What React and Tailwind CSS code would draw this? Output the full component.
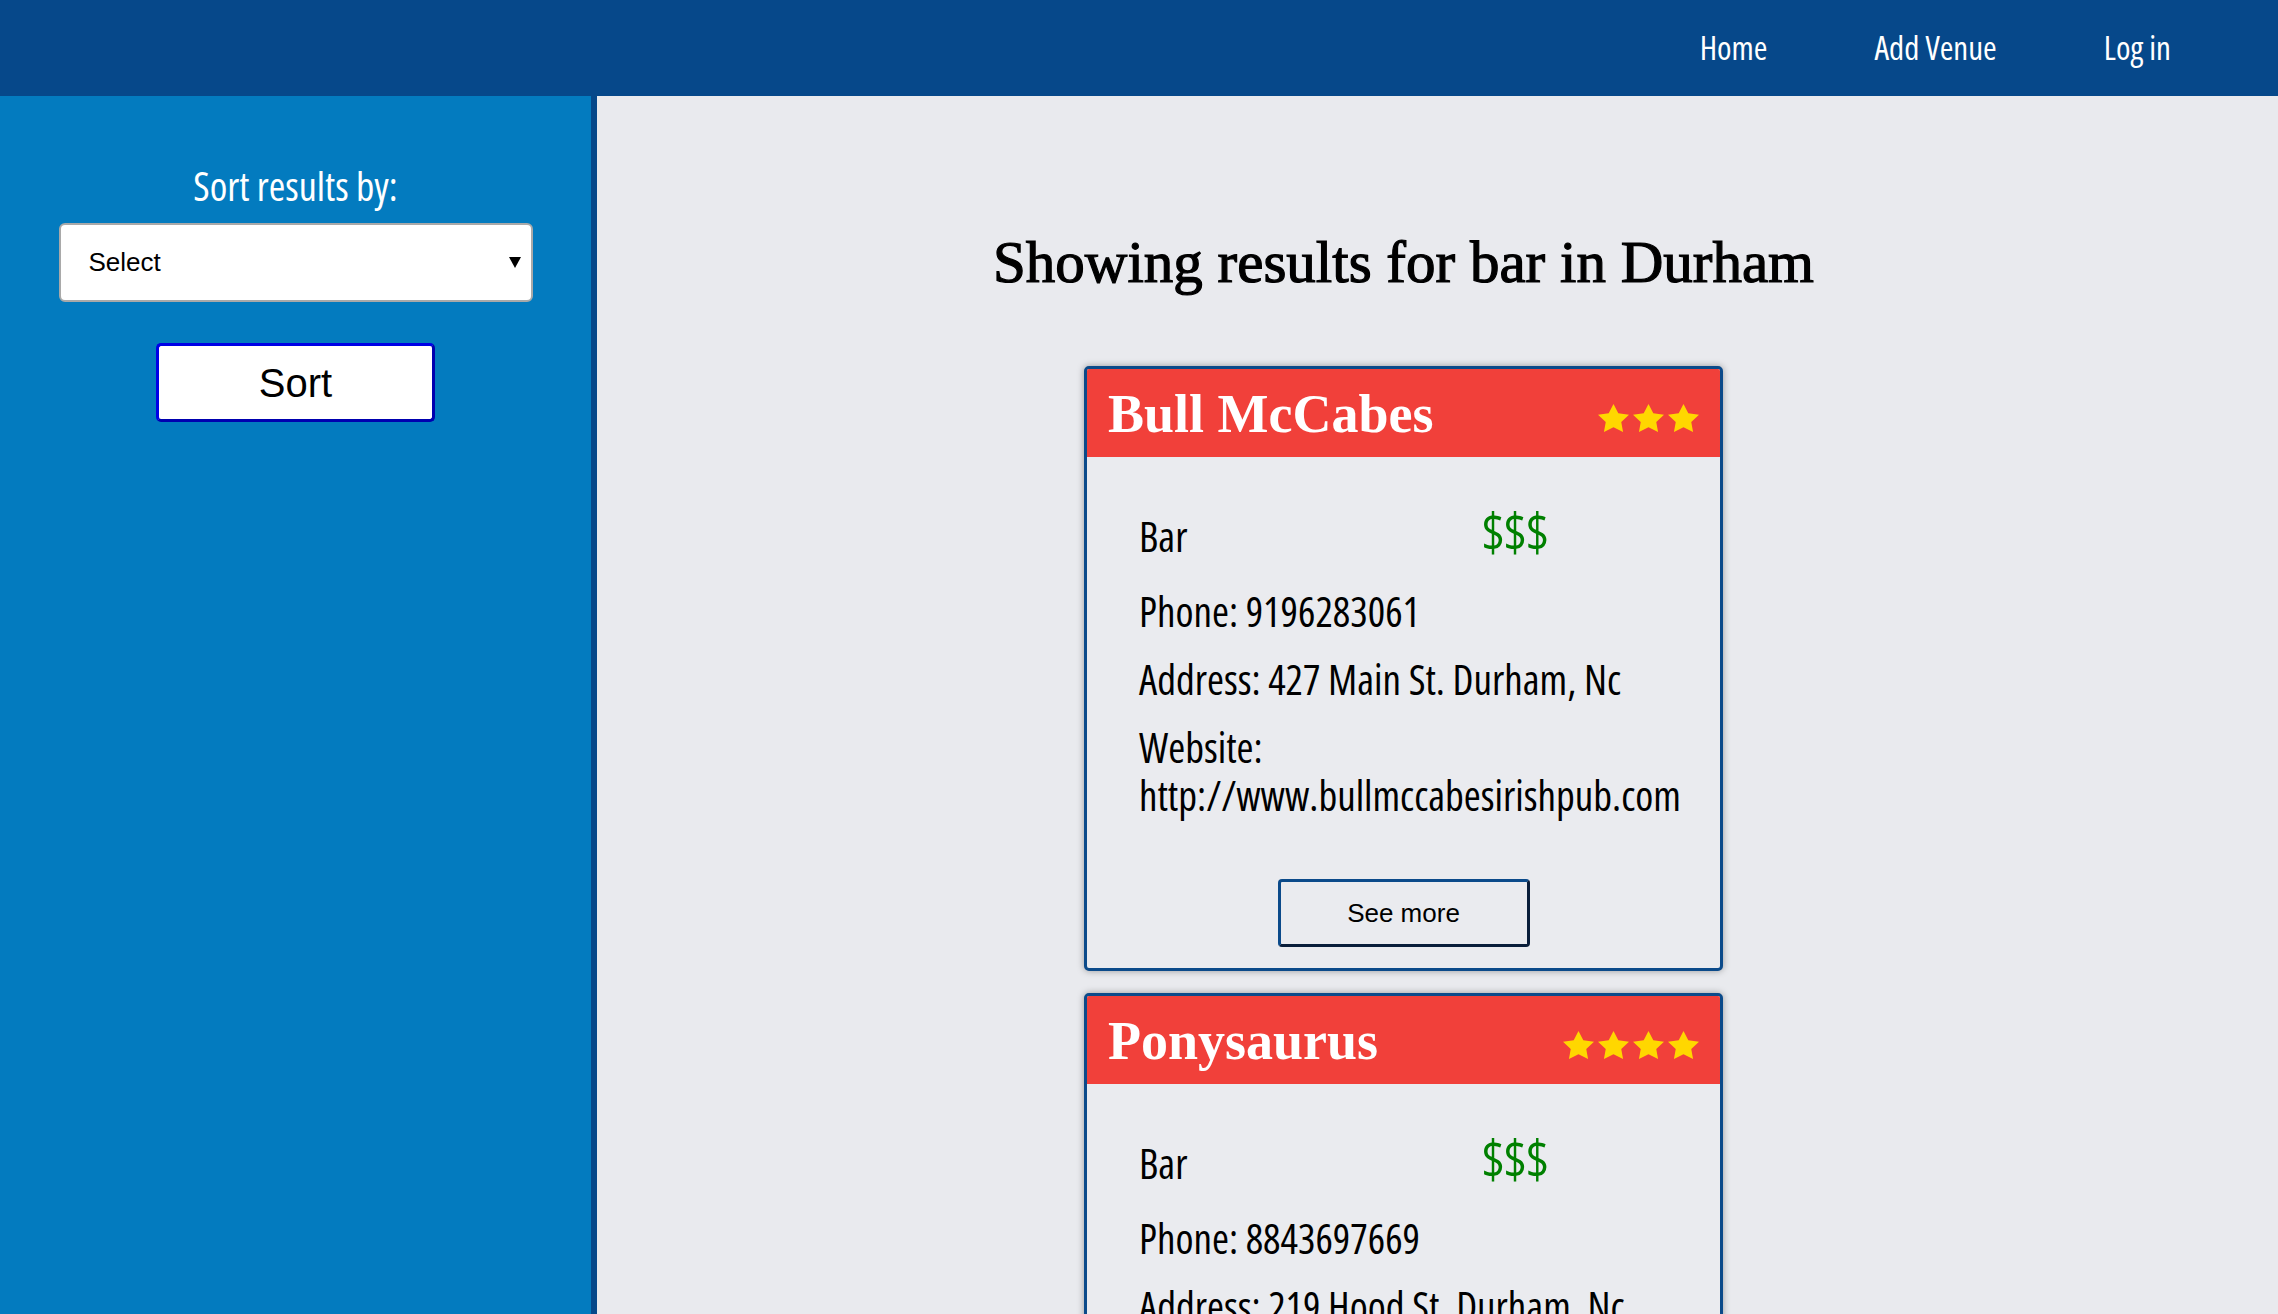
/* Venue search results — blue sidebar with sort controls, red-topped venue cards. */
import React from "react";

const NARROW = "font-['Open_Sans',sans-serif] font-stretch-condensed";
const SERIF = "font-['Liberation_Serif','DejaVu_Serif',serif]";
const ARIAL = "font-['Liberation_Sans',Arial,sans-serif]";

const venues = [
  {
    name: "Bull McCabes",
    stars: 3,
    kind: "Bar",
    price: "$$$",
    phone: "9196283061",
    address: "427 Main St. Durham, Nc",
    website: "http://www.bullmccabesirishpub.com",
  },
  {
    name: "Ponysaurus",
    stars: 4,
    kind: "Bar",
    price: "$$$",
    phone: "8843697669",
    address: "219 Hood St. Durham, Nc",
    website: "http://www.ponysaurusbrewing.com",
  },
  {
    name: "Fullsteam",
    stars: 4,
    kind: "Bar",
    price: "$$",
    phone: "9196822337",
    address: "726 Rigsbee Ave. Durham, Nc",
    website: "http://www.fullsteam.ag",
  },
  {
    name: "Motorco",
    stars: 3,
    kind: "Bar",
    price: "$$",
    phone: "9199012537",
    address: "723 Rigsbee Ave. Durham, Nc",
    website: "http://www.motorcomusic.com",
  },
];

function Star() {
  return (
    <svg width="31" height="28" viewBox="2 2 20 19" preserveAspectRatio="none" aria-hidden="true">
      <path
        d="M12 2l3.09 6.26L22 9.27l-5 4.87 1.18 6.88L12 17.77l-6.18 3.25L7 14.14 2 9.27l6.91-1.01L12 2z"
        fill="#ffd700"
      />
    </svg>
  );
}

function NavBar() {
  return (
    <header className="h-[96px] bg-[#06488a] flex items-center justify-end gap-[107px] pr-[107px]">
      {["Home", "Add Venue", "Log in"].map((label) => (
        <a key={label} href="#" className={`${NARROW} text-[33px] text-white`}>
          {label}
        </a>
      ))}
    </header>
  );
}

function SortPanel() {
  return (
    <aside className="w-[597px] shrink-0 bg-[#037bbf] border-r-[6px] border-[#06488a] flex flex-col items-center pt-[70px]">
      <h3 className={`${NARROW} text-[40px] leading-[40px] text-white`}>Sort results by:</h3>
      <div className="relative mt-[17px] w-[474px]">
        <select
          className={`${ARIAL} appearance-none w-full h-[79px] rounded-[6px] border-2 border-[#a9a9a9] bg-white pl-[28px] text-[26px] text-black outline-none`}
          defaultValue=""
        >
          <option value="">Select</option>
          <option value="rating">Rating</option>
          <option value="price">Price</option>
        </select>
        <span className="pointer-events-none absolute right-[12px] top-[34px] border-l-[6px] border-r-[6px] border-t-[11px] border-l-transparent border-r-transparent border-t-black" />
      </div>
      <button
        type="button"
        className={`${ARIAL} mt-[41px] w-[279px] h-[79px] rounded-[5px] border-[3px] border-t-[#0000e6] border-l-[#0000e6] border-b-[#0000b0] border-r-[#0000b0] bg-white text-[40px] text-black`}
      >
        Sort
      </button>
    </aside>
  );
}

function VenueCard({ venue }) {
  return (
    <div className="w-[639px] overflow-hidden rounded-[5px] border-[3px] border-[#0b4a8a] bg-[#eaebef] shadow-[0_0_7px_rgba(0,0,0,0.35)]">
      <div className="h-[88px] bg-[#f1403a] flex items-end justify-between px-[21px] pb-[16px]">
        <h2 className={`${SERIF} font-bold text-[54px] leading-none text-white`}>{venue.name}</h2>
        <div className="mb-[9px] flex gap-[4px]">
          {Array.from({ length: venue.stars }).map((_, i) => (
            <Star key={i} />
          ))}
        </div>
      </div>
      <div className={`${NARROW} px-[52px] pt-[51px] pb-[21px] text-black text-[41px] leading-[48px]`}>
        <div className="flex items-baseline">
          <p className="w-[343px]">{venue.kind}</p>
          <p className="text-[52px] leading-[48px] text-[#008000]">{venue.price}</p>
        </div>
        <p className="mt-[27px]">Phone: {venue.phone}</p>
        <p className="mt-[20px]">Address: {venue.address}</p>
        <p className="mt-[20px]">Website: {venue.website}</p>
        <div className="mt-[60px] flex justify-center">
          <button
            type="button"
            className={`${ARIAL} w-[252px] h-[68px] rounded-[4px] border-[3px] border-t-[#0b4a8a] border-l-[#0b4a8a] border-b-[#0a1e3a] border-r-[#0a1e3a] bg-transparent text-[26px] leading-none text-black`}
          >
            See more
          </button>
        </div>
      </div>
    </div>
  );
}

export default function App() {
  return (
    <div className="h-screen overflow-y-scroll bg-[#e9eaee] [&::-webkit-scrollbar]:w-[5px] [&::-webkit-scrollbar-track]:bg-[#f1f1f1] [&::-webkit-scrollbar-thumb]:bg-[#c1c1c1]">
      <NavBar />
      <div className="flex min-h-[calc(100vh-96px)]">
        <SortPanel />
        <main className="flex-1 flex flex-col items-center pt-[137px] pr-[68px] pb-[200px]">
          <h1 className={`${SERIF} text-[59px] leading-none text-black [-webkit-text-stroke:1.2px_#000]`}>
            Showing results for bar in Durham
          </h1>
          <div className="mt-[74px] flex flex-col gap-[22px]">
            {venues.map((v) => (
              <VenueCard key={v.name} venue={v} />
            ))}
          </div>
        </main>
      </div>
    </div>
  );
}
